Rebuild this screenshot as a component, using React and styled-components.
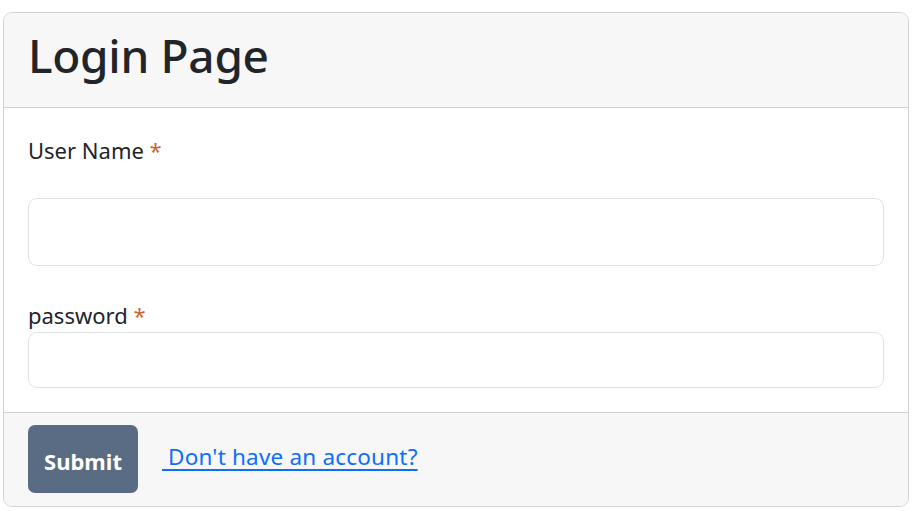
import React from "react";
import styled, { createGlobalStyle } from "styled-components";

const Global = createGlobalStyle`
  html, body { margin: 0; padding: 0; background: #fff; }
  body { font-family: "Noto Sans", "Open Sans", sans-serif; color: #212529; }
  * { box-sizing: border-box; }
`;

const Page = styled.div`
  padding: 12px 7px 8px 3px;
`;

const Card = styled.div`
  border: 1px solid #d3d3d3;
  border-radius: 9px;
  overflow: hidden;
  display: flex;
  flex-direction: column;
`;

const Header = styled.div`
  background: #f7f7f7;
  border-bottom: 1px solid #d3d3d3;
  padding: 0 24px 8px;
  height: 95px;
  display: flex;
  align-items: center;
`;

const Title = styled.h1`
  margin: 0;
  font-size: 46px;
  font-weight: 500;
  line-height: 1.2;
  letter-spacing: -0.3px;
`;

const Body = styled.div`
  padding: 24px;
  display: flex;
  flex-direction: column;
`;

const Label = styled.label`
  font-size: 22px;
  line-height: 36px;
  display: block;
  margin-bottom: ${(p) => p.$gap}px;
`;

const Req = styled.span`
  color: #c9653a;
`;

const Input = styled.input`
  width: 100%;
  height: ${(p) => p.$h}px;
  border: 1px solid #dee2e6;
  border-radius: 9px;
  background: #fff;
  font-size: 22px;
  padding: 0 18px;
  margin-bottom: ${(p) => p.$mb}px;
  outline: none;
`;

const Footer = styled.div`
  background: #f7f7f7;
  border-top: 1px solid #d3d3d3;
  height: 94px;
  padding: 12px 24px 13px;
  display: flex;
  align-items: flex-start;
  gap: 24px;
`;

const Button = styled.button`
  width: 110px;
  height: 68px;
  background: #5a6b84;
  color: #fff;
  border: none;
  border-radius: 7px;
  font-family: inherit;
  font-size: 22px;
  font-weight: 700;
  padding: 3px 0 0;
`;

const Link = styled.a`
  color: #0d6efd;
  font-size: 22.5px;
  letter-spacing: 0.2px;
  text-decoration: underline;
  text-underline-offset: 4px;
  white-space: pre;
  cursor: pointer;
  margin-top: 16px;
`;

export default function App() {
  return (
    <>
      <Global />
      <Page>
        <Card>
          <Header>
            <Title>Login Page</Title>
          </Header>
          <Body>
            <Label $gap={30}>
              User Name <Req>*</Req>
            </Label>
            <Input $h={68} $mb={31} />
            <Label $gap={-1}>
              password <Req>*</Req>
            </Label>
            <Input $h={56} $mb={0} />
          </Body>
          <Footer>
            <Button>Submit</Button>
            <Link>{" Don't have an account?"}</Link>
          </Footer>
        </Card>
      </Page>
    </>
  );
}
